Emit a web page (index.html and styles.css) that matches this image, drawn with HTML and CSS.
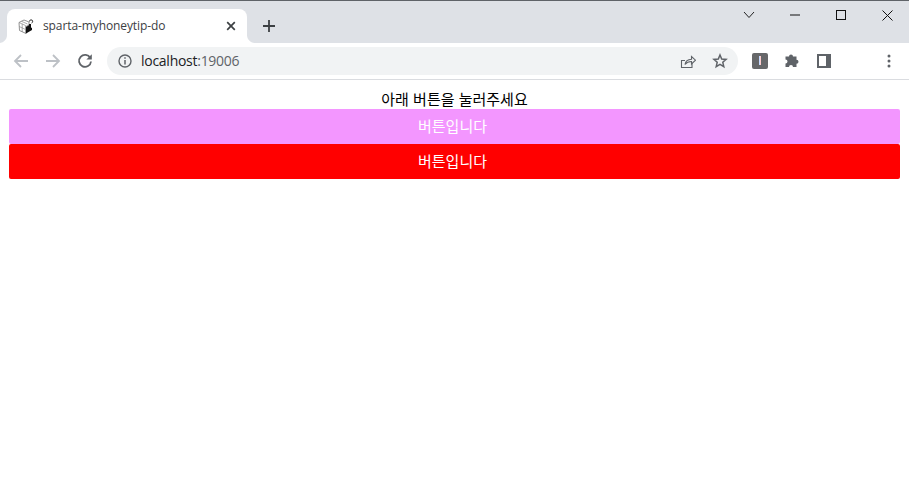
FILE: index.html
```html
<!DOCTYPE html>
<html lang="ko">
<head>
<meta charset="utf-8">
<title>sparta-myhoneytip-do</title>
<link rel="stylesheet" href="styles.css">
</head>
<body>
<header class="chrome">
  <div class="tabstrip">
    <div class="tab">
      <svg class="favicon" width="16" height="16" viewBox="0 0 16 16">
        <path d="M1 4.500 6 2l5 2v3L8 8.500V15.500L1.500 12.500z" fill="#fff" stroke="#777" stroke-width=".8"/>
        <path d="M1 4.500 7.500 7.500V15.500M3.500 3.300 9.500 6M1.200 8.500 7.500 11.500M4.200 5.800V14" fill="none" stroke="#888" stroke-width=".7"/>
        <path d="M8 9 11 7.300V6h2V9.500l1 .5V12l-6 3.500z" fill="#111"/>
        <path d="M11.500 3.500A1.600 1.600 0 1 1 13.500 5" fill="none" stroke="#333" stroke-width="1"/>
      </svg>
      <span class="tab-title">sparta-myhoneytip-do</span>
      <svg class="tab-close" width="10" height="10" viewBox="0 0 10 10"><path d="M1.200 1.200 8.800 8.800M8.800 1.200 1.200 8.800" stroke="#3c4043" stroke-width="1.700"/></svg>
    </div>
    <svg class="new-tab" width="14" height="14" viewBox="0 0 14 14"><path d="M7 1v12M1 7h12" stroke="#3c4043" stroke-width="1.800"/></svg>
    <div class="window-controls">
      <svg class="win-chevron" width="12" height="8" viewBox="0 0 12 8"><path d="M1 1l5 5.500L11 1" fill="none" stroke="#222" stroke-width="1"/></svg>
      <svg class="win-min" width="10" height="2" viewBox="0 0 10 2"><path d="M0 1h10" stroke="#111" stroke-width="1"/></svg>
      <svg class="win-max" width="10" height="10" viewBox="0 0 10 10"><rect x=".5" y=".5" width="9" height="9" fill="none" stroke="#111" stroke-width="1"/></svg>
      <svg class="win-close" width="11" height="11" viewBox="0 0 11 11"><path d="M.5.500l10 10M10.500.500l-10 10" stroke="#111" stroke-width="1"/></svg>
    </div>
  </div>
  <div class="toolbar">
    <svg class="nav nav-back" width="16" height="16" viewBox="0 0 16 16"><path d="M15 8H2M8 2 2 8l6 6" fill="none" stroke="#bdc1c6" stroke-width="1.800"/></svg>
    <svg class="nav nav-forward" width="16" height="16" viewBox="0 0 16 16"><path d="M1 8h13M8 2l6 6-6 6" fill="none" stroke="#bdc1c6" stroke-width="1.800"/></svg>
    <svg class="nav nav-reload" width="16" height="16" viewBox="0 0 16 16"><path d="M13.300 5A6 6 0 1 0 14 8.500" fill="none" stroke="#5f6368" stroke-width="1.800"/><path d="M14.800 1.200V6.600H9.400z" fill="#5f6368"/></svg>
    <div class="omnibox">
      <svg class="info" width="14" height="14" viewBox="0 0 14 14"><circle cx="7" cy="7" r="6" fill="none" stroke="#5f6368" stroke-width="1.400"/><path d="M7 6v4.500" stroke="#5f6368" stroke-width="1.500"/><path d="M7 3.200v1.600" stroke="#5f6368" stroke-width="1.500"/></svg>
      <span class="url">localhost<span class="port">:19006</span></span>
      <svg class="share" width="16" height="16" viewBox="0 0 16 16"><path d="M12 10V14.500H1.500V7.500H5" fill="none" stroke="#5f6368" stroke-width="1.100"/><path d="M5 11.500c.5-3 3-5 6.500-5.200V3.500l4 3.700-4 3.800V8.500C8.500 8.500 6.500 9.500 5 11.500z" fill="none" stroke="#5f6368" stroke-width="1.100"/></svg>
      <svg class="star" width="16" height="16" viewBox="0 0 16 16"><path d="M8 2l1.700 4 4.400.4-3.300 2.900 1 4.300L8 11.300l-3.800 2.300 1-4.300-3.300-2.900 4.400-.4z" fill="none" stroke="#5f6368" stroke-width="1.500"/></svg>
    </div>
    <div class="ext-badge"><span class="ext-bar"></span></div>
    <svg class="puzzle" width="16" height="16" viewBox="0 0 16 16"><path d="M1 5h3.500a2 2 0 1 1 4 0H12v3.300a2 2 0 1 1 0 4V15.500H8.500a2 2 0 1 0-4 0H1v-3.500a2 2 0 1 0 0-4z" fill="#5f6368" transform="translate(.5 -1.500)"/></svg>
    <div class="side-panel"><span class="side-panel-light"></span></div>
    <svg class="kebab" width="4" height="14" viewBox="0 0 4 14"><circle cx="2" cy="2" r="1.500" fill="#5f6368"/><circle cx="2" cy="7" r="1.500" fill="#5f6368"/><circle cx="2" cy="12" r="1.500" fill="#5f6368"/></svg>
  </div>
</header>
<main class="page">
  <p class="prompt">아래 버튼을 눌러주세요</p>
  <button class="btn btn-pink" type="button">버튼입니다</button>
  <button class="btn btn-red" type="button">버튼입니다</button>
</main>
</body>
</html>
```
FILE: styles.css
```css
* { box-sizing: border-box; }
html, body { margin: 0; padding: 0; height: 100%; background: #fff; overflow: hidden; }
body { font-family: "Noto Sans CJK KR", "Liberation Sans", sans-serif; }
svg { display: block; flex: none; }

.chrome { display: flex; flex-direction: column; }
.tabstrip {
  height: 43px;
  background: #dee1e6;
  border-top: 1px solid #5f6368;
  display: flex;
  align-items: flex-start;
  padding-left: 7px;
}
.tab {
  position: relative;
  width: 240px;
  height: 34px;
  margin-top: 8px;
  background: #fff;
  border-radius: 8px 8px 0 0;
  display: flex;
  align-items: center;
  padding: 0 11px 0 11px;
}
.tab::before,
.tab::after {
  content: "";
  position: absolute;
  bottom: 0;
  width: 8px;
  height: 8px;
}
.tab::before {
  left: -8px;
  background: radial-gradient(circle at 0 0, #dee1e6 7.5px, #fff 8.5px);
}
.tab::after {
  right: -8px;
  background: radial-gradient(circle at 100% 0, #dee1e6 7.5px, #fff 8.5px);
}
.favicon { margin-top: -1px; }
.tab-title {
  margin-left: 9px;
  flex: 1;
  font: 12px/16px "Open Sans", "Liberation Sans", sans-serif;
  letter-spacing: -0.1px;
  color: #3c4043;
  white-space: nowrap;
}
.new-tab { margin: 18px 0 0 15px; }
.window-controls {
  margin-left: auto;
  display: flex;
  align-items: center;
  height: 28px;
  padding-right: 16px;
}
.win-min { margin-left: 35px; }
.win-max { margin-left: 36px; }
.win-close { margin-left: 36px; }

.toolbar {
  height: 37px;
  background: #fff;
  border-bottom: 1px solid #dadce0;
  display: flex;
  align-items: center;
  padding: 0 18px 1px 13px;
}
.nav-forward { margin-left: 16px; }
.nav-reload { margin-left: 16px; }
.omnibox {
  width: 631px;
  height: 28px;
  margin-left: 14px;
  background: #f1f3f4;
  border-radius: 14px;
  display: flex;
  align-items: center;
  padding: 0 10px 0 11px;
}
.url {
  margin-left: 9px;
  flex: 1;
  font: 14px/18px "Open Sans", "Liberation Sans", sans-serif;
  letter-spacing: -0.27px;
  color: #202124;
}
.port { color: #5f6368; }
.star { margin-left: 16px; }
.ext-badge {
  width: 16px;
  height: 16px;
  margin-left: 14px;
  background: #666769;
  border-radius: 2px;
  display: flex;
  align-items: center;
  justify-content: center;
}
.ext-bar { width: 2px; height: 9px; background: linear-gradient(90deg, #8fb4ff 0, #fff 50%, #ff9a9a 100%); }
.puzzle { margin-left: 16px; }
.side-panel {
  width: 14px;
  height: 14px;
  margin-left: 17px;
  background: #5f6368;
  padding: 2px 5px 2px 2px;
}
.side-panel-light { display: block; width: 100%; height: 100%; background: #fff; }
.kebab { margin-left: auto; }

.page { padding: 9px 9px 0; }
.prompt {
  margin: 0;
  height: 20px;
  font-size: 15px;
  line-height: 20px;
  text-align: center;
  color: #000;
}
.btn {
  display: block;
  width: 100%;
  height: 35px;
  border: 0;
  border-radius: 2px;
  padding: 0 4px 2px 0;
  font: 15px/33px "Noto Sans CJK KR", "Liberation Sans", sans-serif;
  color: #fff;
  text-align: center;
}
.btn-pink { background: #f396ff; }
.btn-red { background: #ff0000; }
```
